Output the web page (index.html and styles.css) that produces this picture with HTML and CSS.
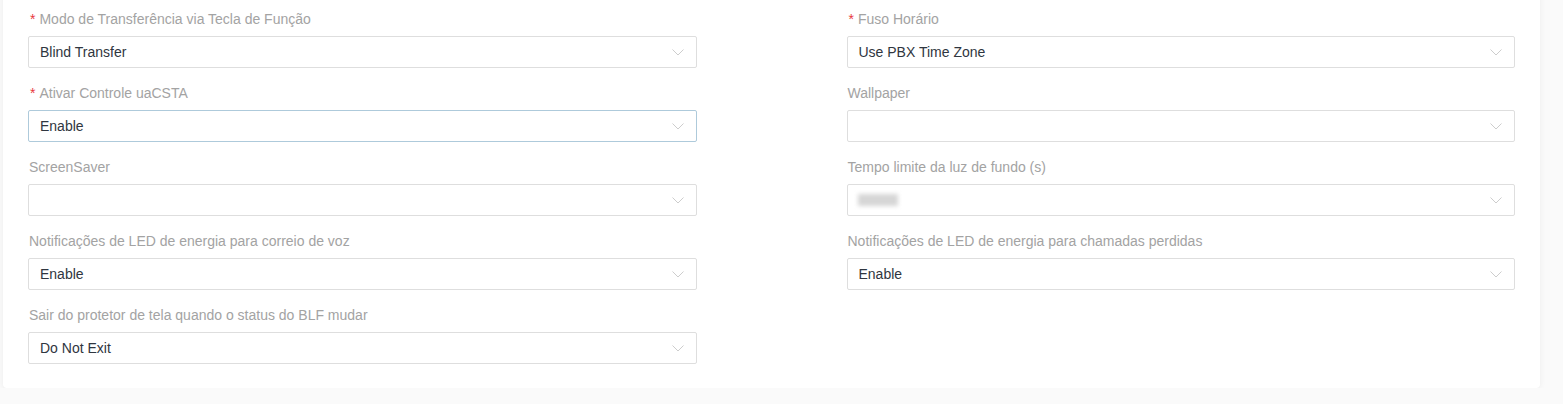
FILE: index.html
```html
<!DOCTYPE html>
<html lang="pt">
<head>
  <meta charset="UTF-8" />
  <title>Configurações</title>
  <link rel="stylesheet" href="styles.css">
</head>
<body>
  <div class="card">
    <div class="form-grid">
      <div class="item">
        <label class="req">Modo de Transferência via Tecla de Função</label>
        <div class="select"><span class="value">Blind Transfer</span><svg class="arrow" viewBox="0 0 12 7"><path d="M0.5 0.5 L6 6 L11.5 0.5" /></svg></div>
      </div>
      <div class="item">
        <label class="req">Fuso Horário</label>
        <div class="select"><span class="value">Use PBX Time Zone</span><svg class="arrow" viewBox="0 0 12 7"><path d="M0.5 0.5 L6 6 L11.5 0.5" /></svg></div>
      </div>
      <div class="item">
        <label class="req">Ativar Controle uaCSTA</label>
        <div class="select focus"><span class="value">Enable</span><svg class="arrow" viewBox="0 0 12 7"><path d="M0.5 0.5 L6 6 L11.5 0.5" /></svg></div>
      </div>
      <div class="item">
        <label>Wallpaper</label>
        <div class="select"><span class="value"></span><svg class="arrow" viewBox="0 0 12 7"><path d="M0.5 0.5 L6 6 L11.5 0.5" /></svg></div>
      </div>
      <div class="item">
        <label>ScreenSaver</label>
        <div class="select"><span class="value"></span><svg class="arrow" viewBox="0 0 12 7"><path d="M0.5 0.5 L6 6 L11.5 0.5" /></svg></div>
      </div>
      <div class="item">
        <label>Tempo limite da luz de fundo (s)</label>
        <div class="select"><span class="value"><span class="blurred"></span></span><svg class="arrow" viewBox="0 0 12 7"><path d="M0.5 0.5 L6 6 L11.5 0.5" /></svg></div>
      </div>
      <div class="item">
        <label>Notificações de LED de energia para correio de voz</label>
        <div class="select"><span class="value">Enable</span><svg class="arrow" viewBox="0 0 12 7"><path d="M0.5 0.5 L6 6 L11.5 0.5" /></svg></div>
      </div>
      <div class="item">
        <label>Notificações de LED de energia para chamadas perdidas</label>
        <div class="select"><span class="value">Enable</span><svg class="arrow" viewBox="0 0 12 7"><path d="M0.5 0.5 L6 6 L11.5 0.5" /></svg></div>
      </div>
      <div class="item">
        <label>Sair do protetor de tela quando o status do BLF mudar</label>
        <div class="select"><span class="value">Do Not Exit</span><svg class="arrow" viewBox="0 0 12 7"><path d="M0.5 0.5 L6 6 L11.5 0.5" /></svg></div>
      </div>
    </div>
  </div>
</body>
</html>
```

FILE: styles.css
```css
body {
  margin: 0;
  background: #fafafa;
  font-family: "Liberation Sans", Arial, sans-serif;
  color: #333;
}

.card {
  margin: -10px 23px 0 3px;
  padding: 20px 25px 8px 25px;
  background: #fff;
  border-radius: 4px;
  box-shadow: 0 1px 6px rgba(0, 0, 0, 0.06);
}

.form-grid {
  display: grid;
  grid-template-columns: 1fr 1fr;
  column-gap: 150px;
}

.item {
  margin-bottom: 16px;
}

label {
  display: block;
  height: 22px;
  line-height: 18px;
  margin-bottom: 4px;
  padding-left: 1px;
  font-size: 14px;
  color: #a3a3a3;
}

label.req::before {
  content: "*";
  color: #e8383d;
  margin-right: 4px;
  margin-left: 1px;
}

.select {
  height: 32px;
  box-sizing: border-box;
  border: 1px solid #dedede;
  border-radius: 2px;
  display: flex;
  align-items: center;
  padding: 0 12px 0 11px;
  background: #fff;
}

.select.focus {
  border-color: #aecadb;
}

.value {
  flex: 1;
  font-size: 14px;
  color: #2f3640;
  display: flex;
  align-items: center;
}

.blurred {
  display: inline-block;
  width: 40px;
  height: 12px;
  margin-left: -1px;
  background: #d6d6d6;
  filter: blur(2px);
}

.arrow {
  width: 12px;
  height: 7px;
  fill: none;
  stroke: #cdcdcd;
  stroke-width: 1;
}
```
